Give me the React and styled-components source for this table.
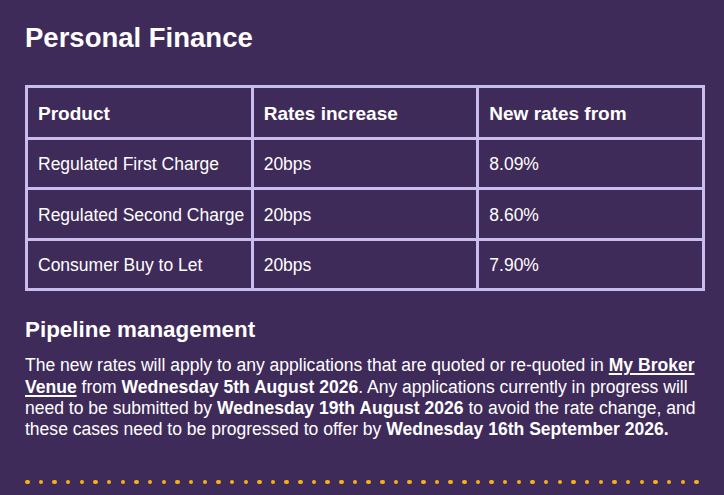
import React from "react";
import styled, { createGlobalStyle } from "styled-components";

const GlobalStyle = createGlobalStyle`
  html, body {
    margin: 0;
    padding: 0;
    background: #3f2b5a;
  }
  body {
    font-family: "Liberation Sans", Arial, sans-serif;
    color: #ffffff;
  }
`;

const Page = styled.main`
  min-height: 495px;
  box-sizing: border-box;
  padding: 22px 19px 0 25px;
  background: #3f2b5a;
  display: flex;
  flex-direction: column;
`;

const Title = styled.h1`
  margin: 0 0 31px;
  font-size: 27.5px;
  line-height: 32px;
  font-weight: 700;
  color: #ffffff;
`;

const RatesTable = styled.table`
  width: 680px;
  table-layout: fixed;
  border-collapse: separate;
  border-spacing: 3px;
  background: #c9bdf0;
  margin: 0;
`;

const HeadCell = styled.th`
  background: #3f2b5a;
  height: 49px;
  padding: 2px 10px 0;
  box-sizing: border-box;
  text-align: left;
  font-size: 19px;
  font-weight: 700;
  color: #ffffff;
  vertical-align: middle;
  white-space: nowrap;
`;

const Cell = styled.td`
  background: #3f2b5a;
  height: 47.4px;
  padding: 2px 0 0 10px;
  box-sizing: border-box;
  font-size: 17.5px;
  color: #ffffff;
  vertical-align: middle;
  white-space: nowrap;
`;

const SubTitle = styled.h2`
  margin: 25px 0 12px;
  font-size: 22.4px;
  line-height: 27px;
  font-weight: 700;
  color: #ffffff;
`;

const Body = styled.p`
  margin: 0;
  font-size: 17.55px;
  line-height: 21.4px;
  color: #ffffff;
`;

const Strong = styled.strong`
  font-weight: 700;
`;

const Link = styled.a`
  color: #ffffff;
  font-weight: 700;
  text-decoration: underline;
  text-decoration-thickness: 2px;
  text-underline-offset: 2px;
`;

const DotRow = styled.div`
  margin-top: 39px;
  width: 674px;
  display: flex;
  justify-content: space-between;
  align-items: center;
`;

const Dot = styled.span`
  width: 4.5px;
  height: 4.5px;
  border-radius: 50%;
  background: #f9b20c;
`;

const rows = [
  ["Regulated First Charge", "20bps", "8.09%"],
  ["Regulated Second Charge", "20bps", "8.60%"],
  ["Consumer Buy to Let", "20bps", "7.90%"],
];

export default function App() {
  return (
    <>
      <GlobalStyle />
      <Page>
        <Title>Personal Finance</Title>
        <RatesTable>
          <thead>
            <tr>
              <HeadCell>Product</HeadCell>
              <HeadCell>Rates increase</HeadCell>
              <HeadCell>New rates from</HeadCell>
            </tr>
          </thead>
          <tbody>
            {rows.map((r) => (
              <tr key={r[0]}>
                {r.map((c, i) => (
                  <Cell key={i}>{c}</Cell>
                ))}
              </tr>
            ))}
          </tbody>
        </RatesTable>
        <SubTitle>Pipeline management</SubTitle>
        <Body>
          The new rates will apply to any applications that are quoted or re-quoted in{" "}
          <Link href="#">My Broker Venue</Link> from <Strong>Wednesday 5th August 2026</Strong>. Any
          applications currently in progress will need to be submitted by{" "}
          <Strong>Wednesday 19th August 2026</Strong> to avoid the rate change, and these cases need
          to be progressed to offer by <Strong>Wednesday 16th September 2026.</Strong>
        </Body>
        <DotRow>
          {Array.from({ length: 50 }, (_, i) => (
            <Dot key={i} />
          ))}
        </DotRow>
      </Page>
    </>
  );
}
